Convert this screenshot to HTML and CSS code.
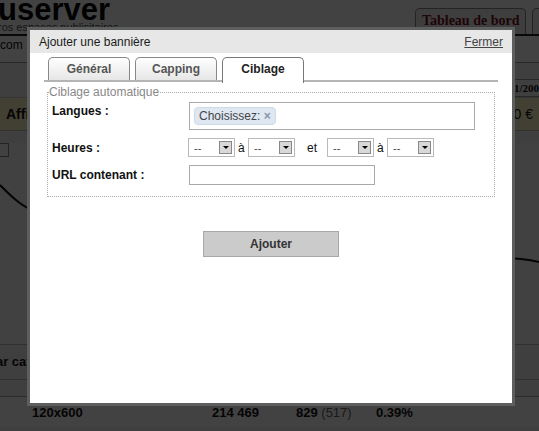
FILE: index.html
```html
<!DOCTYPE html>
<html lang="fr">
<head>
    <meta charset="UTF-8">
    <meta name="viewport" content="width=device-width, initial-scale=1.0">
    <title>Ajouter une bannière</title>
    <link rel="stylesheet" href="styles.css">
</head>
<body>
    <div class="page">
        <div class="page-header">
            <div class="brand">
                <div class="brand-name">userver</div>
                <div class="brand-tagline">ros espaces publicitaires</div>
            </div>
            <div class="main-tabs">
                <div class="main-tab">Tableau de bord</div>
                <div class="main-tab main-tab-cut">P</div>
            </div>
        </div>
        <div class="site-row"><span>com</span></div>
        <div class="period-row"><span class="period">1/200</span></div>
        <div class="stats-band">
            <span>Affichages</span>
            <span>0 €</span>
        </div>
        <div class="chart">
            <div class="chart-box"></div>
            <svg class="chart-line" width="539" height="200" viewBox="0 0 539 200">
                <path d="M0 42 C10 52 20 62 30 66" fill="none" stroke="#111" stroke-width="2"/>
                <path d="M505 115 C515 115 525 116 539 119" fill="none" stroke="#111" stroke-width="2"/>
            </svg>
        </div>
        <div class="cat-row"><span>par cat</span></div>
        <div class="spacer-row"></div>
        <div class="table-row">
            <span class="col-format">120x600</span>
            <span class="col-views">214 469</span>
            <span class="col-clicks">829 <em>(517)</em></span>
            <span class="col-ctr">0.39%</span>
        </div>
    </div>

    <div class="overlay"></div>

    <div class="modal">
        <div class="modal-header">
            <span class="modal-title">Ajouter une bannière</span>
            <a class="modal-close" href="#">Fermer</a>
        </div>
        <div class="modal-body">
            <div class="tabs">
                <div class="tab">Général</div>
                <div class="tab">Capping</div>
                <div class="tab tab-active">Ciblage</div>
            </div>

            <fieldset class="targeting">
                <legend>Ciblage automatique</legend>
                <div class="form-row form-row-langs">
                    <label>Langues :</label>
                    <div class="token-input">
                        <span class="token">Choisissez: <b>×</b></span>
                    </div>
                </div>
                <div class="form-row">
                    <label>Heures :</label>
                    <div class="hours">
                        <div class="select"><span>--</span><i></i></div>
                        <span class="sep">à</span>
                        <div class="select"><span>--</span><i></i></div>
                        <span class="sep sep-et">et</span>
                        <div class="select"><span>--</span><i></i></div>
                        <span class="sep">à</span>
                        <div class="select"><span>--</span><i></i></div>
                    </div>
                </div>
                <div class="form-row">
                    <label>URL contenant :</label>
                    <div class="text-input"></div>
                </div>
            </fieldset>

            <div class="actions">
                <button class="btn-add">Ajouter</button>
            </div>
        </div>
    </div>
</body>
</html>
```

FILE: styles.css
```css
html, body {
    margin: 0;
    padding: 0;
    height: 100%;
    overflow: hidden;
}
body {
    font-family: "Liberation Sans", Arial, sans-serif;
    font-size: 12px;
    background: #fff;
    color: #111;
}

/* background page */
.page {
    width: 539px;
    height: 431px;
    background: #f4f4f4;
}
.page-header {
    display: flex;
    justify-content: space-between;
    height: 34px;
    border-bottom: 2px solid #222;
    background: #fff;
}
.brand-name {
    font-size: 31px;
    font-weight: bold;
    line-height: 19px;
    color: #0a0a0a;
    margin-left: -2px;
}
.brand-tagline {
    font-size: 11px;
    line-height: 12px;
    margin-top: 2px;
    color: #555;
    margin-left: -2px;
}
.main-tabs {
    display: flex;
    gap: 6px;
    align-items: flex-end;
    margin-right: -16px;
}
.main-tab {
    font-family: "Liberation Serif", serif;
    font-weight: bold;
    font-size: 14px;
    color: #7a1020;
    border: 1px solid #888;
    border-bottom: none;
    border-radius: 5px 5px 0 0;
    padding: 4px 6px 5px;
    background: #f0f0f0;
}
.site-row {
    height: 26px;
    line-height: 18px;
    border-bottom: 1px solid #999;
    background: #fff;
}
.period-row {
    height: 34px;
    display: flex;
    justify-content: flex-end;
    align-items: flex-end;
    border-bottom: 1px solid #ccc;
}
.period {
    font-family: "Liberation Serif", serif;
    font-weight: bold;
    font-size: 11px;
    margin-right: -4px;
    padding: 2px 3px;
    border: 1px solid #999;
}
.stats-band {
    height: 32px;
    display: flex;
    justify-content: space-between;
    align-items: center;
    padding: 0 6px;
    background: #fff7c4;
    font-size: 14px;
    font-weight: bold;
    border-bottom: 1px solid #bbb;
}
.stats-band span:last-child {
    font-weight: normal;
}
.chart {
    position: relative;
    height: 201px;
    background: #fafafa;
    border-bottom: 1px solid #bbb;
}
.chart-box {
    width: 8px;
    height: 12px;
    margin-top: 12px;
    border: 1px solid #888;
    border-left: none;
}
.chart-line {
    position: absolute;
    left: 0;
    top: 0;
}
.cat-row {
    height: 34px;
    line-height: 34px;
    font-weight: bold;
    font-size: 13px;
    margin-left: -12px;
    border-bottom: 1px solid #bbb;
}
.spacer-row {
    height: 16px;
    border-bottom: 1px solid #aaa;
}
.table-row {
    height: 30px;
    display: flex;
    align-items: center;
    font-weight: bold;
    font-size: 13px;
    background: #fff;
}
.col-format { margin-left: 32px; width: 180px; }
.col-views { width: 84px; }
.col-clicks { width: 80px; }
.col-clicks em { font-style: normal; color: #666; font-weight: normal; }

.overlay {
    position: fixed;
    inset: 0;
    background: rgba(0, 0, 0, 0.74);
}

/* modal */
.modal {
    position: absolute;
    left: 27px;
    top: 27px;
    width: 482px;
    height: 373px;
    border: 3px solid #5d5f5f;
    background: #fff;
}
.modal-header {
    display: flex;
    justify-content: space-between;
    align-items: center;
    height: 23px;
    padding: 0 9px;
    background: #e7e7e7;
    color: #1a1a1a;
}
.modal-close {
    color: #444;
    text-decoration: underline;
}
.modal-body {
    padding: 4px 14px 0;
}

.tabs {
    display: flex;
    gap: 5px;
    padding-left: 4px;
    border-bottom: 2px solid #b4b4b4;
    height: 23px;
}
.tab {
    width: 80px;
    height: 22px;
    line-height: 22px;
    text-align: center;
    font-weight: bold;
    color: #555;
    border: 1px solid #888;
    border-bottom: none;
    border-radius: 5px 5px 0 0;
    background: linear-gradient(#fff, #e6e6e6);
}
.tab-active {
    height: 25px;
    background: #fff;
    color: #222;
    border-color: #777;
}

.targeting {
    margin: 3px 3px 0;
    padding: 2px 4px 11px;
    border: 1px dotted #aaa;
}
.targeting legend {
    padding: 0;
    margin-left: -3px;
    color: #888;
}
.form-row {
    display: flex;
    align-items: center;
    margin-bottom: 8px;
}
.form-row:last-child {
    margin-bottom: 0;
}
.form-row label {
    width: 137px;
    font-weight: bold;
    color: #111;
}
.form-row-langs {
    align-items: flex-start;
    margin-bottom: 8px;
}
.form-row-langs label {
    padding-top: 3px;
}
.token-input {
    width: 280px;
    height: 26px;
    border: 1px solid #aaa;
    display: flex;
    align-items: center;
    padding-left: 4px;
    margin-top: 1px;
}
.token {
    background: #dfe7f3;
    border: 1px solid #cfd9e8;
    border-radius: 4px;
    padding: 1px 4px;
    color: #444;
}
.token b {
    color: #8a96a8;
}
.hours {
    display: flex;
    align-items: center;
    margin-left: -1px;
}
.select {
    width: 38px;
    height: 17px;
    border: 1px solid #b9b9b9;
    display: flex;
    justify-content: space-between;
    align-items: center;
    padding-left: 5px;
    padding-right: 2px;
    box-sizing: content-box;
    color: #444;
    font-size: 11px;
}
.select i {
    width: 11px;
    height: 11px;
    border: 1px solid #888;
    background: #d8d8d8;
    position: relative;
}
.select i::after {
    content: "";
    position: absolute;
    left: 3px;
    top: 4px;
    border-left: 3px solid transparent;
    border-right: 3px solid transparent;
    border-top: 3px solid #000;
}
.sep {
    width: 13px;
    padding-left: 3px;
    box-sizing: border-box;
}
.sep-et {
    width: 32px;
    padding-left: 12px;
}
.text-input {
    width: 184px;
    height: 18px;
    border: 1px solid #aaa;
}

.actions {
    display: flex;
    justify-content: center;
    margin-top: 34px;
}
.btn-add {
    width: 136px;
    height: 26px;
    background: #cbcbcb;
    border: 1px solid #a8a8a8;
    font-family: "Liberation Sans", Arial, sans-serif;
    font-size: 12px;
    font-weight: bold;
    color: #333;
}
```
